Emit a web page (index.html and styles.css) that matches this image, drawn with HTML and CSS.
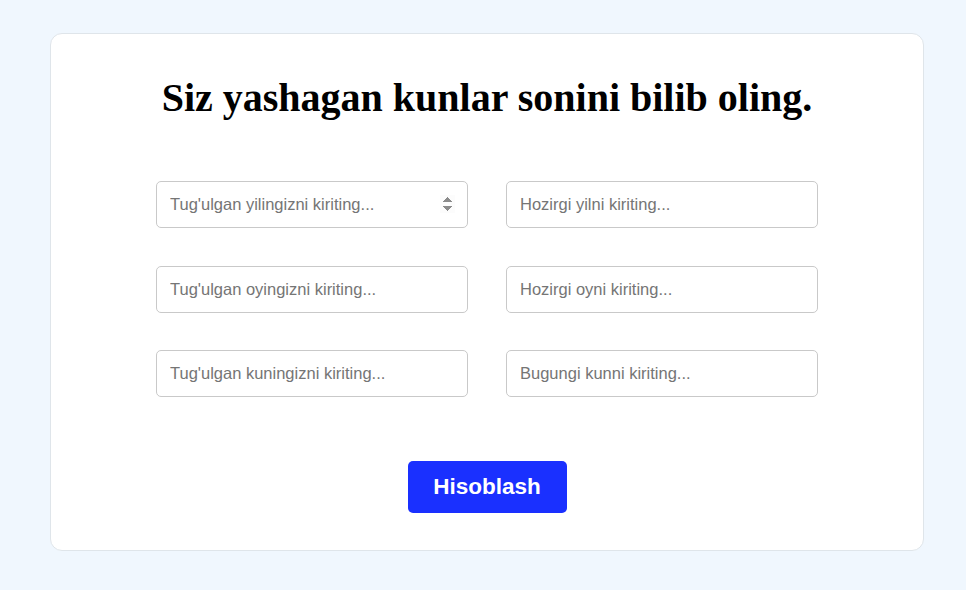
FILE: index.html
```html
<!DOCTYPE html>
<html lang="uz">
<head>
<meta charset="utf-8">
<title>Yashagan kunlar</title>
<link rel="stylesheet" href="styles.css">
</head>
<body>
<main class="card">
  <h1 class="title">Siz yashagan kunlar sonini bilib oling.</h1>
  <div class="fields">
    <input class="field" type="number" placeholder="Tug'ulgan yilingizni kiriting...">
    <input class="field" type="text" placeholder="Hozirgi yilni kiriting...">
    <input class="field" type="text" placeholder="Tug'ulgan oyingizni kiriting...">
    <input class="field" type="text" placeholder="Hozirgi oyni kiriting...">
    <input class="field" type="text" placeholder="Tug'ulgan kuningizni kiriting...">
    <input class="field" type="text" placeholder="Bugungi kunni kiriting...">
  </div>
  <div class="actions">
    <button class="btn" type="button">Hisoblash</button>
  </div>
</main>
</body>
</html>
```

FILE: styles.css
```css
html, body {
  margin: 0;
  padding: 0;
}
body {
  background: #f0f7fe;
  padding: 33px 42px 40px 50px;
  font-family: "Liberation Sans", Arial, sans-serif;
}
.card {
  background: #ffffff;
  border: 1px solid #dfe5ea;
  border-radius: 12px;
  box-sizing: border-box;
  height: 518px;
  padding-top: 40px;
  display: flex;
  flex-direction: column;
  align-items: center;
}
.title {
  margin: 0;
  font-family: "Liberation Serif", "Times New Roman", serif;
  font-weight: bold;
  font-size: 40px;
  line-height: 48px;
  color: #000;
}
.fields {
  margin-top: 59px;
  display: grid;
  grid-template-columns: 312px 312px;
  column-gap: 38px;
  row-gap: 37.5px;
}
.field {
  box-sizing: border-box;
  height: 47px;
  width: 312px;
  border: 1px solid #c9c9c9;
  border-radius: 5px;
  padding: 0 12px 0 13px;
  font-family: "Liberation Sans", Arial, sans-serif;
  font-size: 16.5px;
  color: #333;
  background: #fff;
  outline: none;
}
.field::placeholder {
  color: #757575;
}
.field::-webkit-inner-spin-button {
  opacity: 1;
}
.actions {
  margin-top: 64px;
}
.btn {
  width: 159px;
  height: 52px;
  border: none;
  border-radius: 5px;
  background: #1a30ff;
  color: #fff;
  font-family: "Liberation Sans", Arial, sans-serif;
  font-weight: bold;
  font-size: 22.5px;
  cursor: pointer;
}
```
